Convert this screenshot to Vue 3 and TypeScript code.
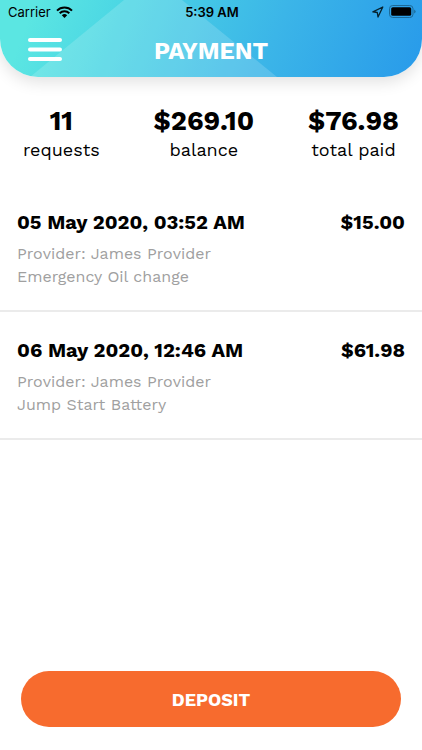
<script setup lang="ts">
interface Stat {
  value: string
  label: string
}

interface Payment {
  date: string
  amount: string
  provider: string
  service: string
}

const stats: Stat[] = [
  { value: '11', label: 'requests' },
  { value: '$269.10', label: 'balance' },
  { value: '$76.98', label: 'total paid' },
]

const payments: Payment[] = [
  {
    date: '05 May 2020, 03:52 AM',
    amount: '$15.00',
    provider: 'James Provider',
    service: 'Emergency Oil change',
  },
  {
    date: '06 May 2020, 12:46 AM',
    amount: '$61.98',
    provider: 'James Provider',
    service: 'Jump Start Battery',
  },
]
</script>

<template>
  <div class="screen">
    <header class="header">
      <svg class="header-art" viewBox="0 0 422 77" preserveAspectRatio="none" aria-hidden="true">
        <polygon points="30,77 124,0 182,0 277,77" fill="#fff" fill-opacity="0.16" />
      </svg>
      <div class="status">
        <div class="carrier">
          <span>Carrier</span>
          <svg width="17" height="12" viewBox="0 0 17 12" aria-hidden="true">
            <g fill="none" stroke="#000" stroke-width="2">
              <path d="M1 4.6a10.6 10.6 0 0 1 15 0" />
              <path d="M3.7 7.3a6.8 6.8 0 0 1 9.6 0" />
            </g>
            <path d="M8.5 12 5.8 9.3a3.8 3.8 0 0 1 5.4 0z" />
          </svg>
        </div>
        <time class="clock">5:39 AM</time>
        <div class="indicators">
          <svg width="12" height="12" viewBox="0 0 12 12" aria-hidden="true">
            <path
              d="M10.8 1 .9 5.9l4.4.6.7 4.5z"
              fill="none"
              stroke="#06222e"
              stroke-width="1.3"
              stroke-linejoin="round"
            />
          </svg>
          <svg width="27" height="13" viewBox="0 0 27 13" aria-hidden="true">
            <rect x=".5" y=".5" width="23.5" height="12" rx="3.2" fill="none" stroke="#1c6a98" />
            <rect x="2.2" y="2.2" width="20" height="8.6" rx="1.6" />
            <path d="M25.2 4.4q1.4.7 1.4 2.1t-1.4 2.1z" fill="#1c6a98" />
          </svg>
        </div>
      </div>
      <div class="title-bar">
        <button class="menu" type="button" aria-label="Menu">
          <svg width="34" height="24" viewBox="0 0 34 24" aria-hidden="true">
            <g fill="#fff">
              <rect y="0" width="34" height="4" rx="2" />
              <rect y="9.5" width="34" height="4" rx="2" />
              <rect y="19" width="34" height="4" rx="2" />
            </g>
          </svg>
        </button>
        <h1 class="title">PAYMENT</h1>
      </div>
    </header>

    <main class="content">
      <dl class="stats">
        <div v-for="stat in stats" :key="stat.label" class="stat">
          <dt class="stat-label">{{ stat.label }}</dt>
          <dd class="stat-value">{{ stat.value }}</dd>
        </div>
      </dl>

      <ul class="payments">
        <li v-for="payment in payments" :key="payment.date" class="payment">
          <div class="payment-head">
            <h2 class="date">{{ payment.date }}</h2>
            <span class="amount">{{ payment.amount }}</span>
          </div>
          <p class="detail">Provider: {{ payment.provider }}</p>
          <p class="detail">{{ payment.service }}</p>
        </li>
      </ul>
    </main>

    <footer class="footer">
      <button class="deposit" type="button">DEPOSIT</button>
    </footer>
  </div>
</template>

<style>
body {
  margin: 0;
  background: #fff;
}
</style>

<style scoped>
.screen {
  display: flex;
  flex-direction: column;
  min-height: 100vh;
  background: #fff;
  color: #000;
  font-family: "Work Sans", Inter, "Liberation Sans", sans-serif;
}

.header {
  position: relative;
  padding-bottom: 8px;
  border-radius: 0 0 38px 38px;
  background: linear-gradient(112deg, #5be6e2 8%, #4bd6e4 28%, #3bb5e8 64%, #289aea 100%);
  box-shadow: 0 5px 16px rgba(0, 0, 0, 0.12);
}

.header-art {
  position: absolute;
  inset: 0;
  width: 100%;
  height: 100%;
  border-radius: inherit;
}

.status {
  position: relative;
  display: grid;
  grid-template-columns: 1fr auto 1fr;
  align-items: center;
  height: 23px;
  padding: 0 6px 0 8px;
  font-family: Inter, "Liberation Sans", sans-serif;
  font-size: 13px;
}

.carrier,
.indicators {
  display: flex;
  align-items: center;
  gap: 5px;
}

.indicators {
  justify-content: flex-end;
}

.clock {
  font-weight: 600;
}

.title-bar {
  position: relative;
  display: grid;
  grid-template-columns: 1fr auto 1fr;
  align-items: center;
  height: 46px;
}

.menu {
  justify-self: start;
  display: flex;
  margin-left: 28px;
  padding: 8px 0 0;
  border: 0;
  background: none;
  cursor: pointer;
}

.title {
  margin: 0;
  padding-top: 10px;
  color: #fff;
  font-size: 24px;
  line-height: 32px;
  font-weight: 700;
}

.content {
  flex: 1;
}

.stats {
  display: flex;
  justify-content: space-between;
  margin: 0;
  padding: 28px 23px 22px;
}

.stat {
  display: flex;
  flex-direction: column-reverse;
  align-items: center;
}

.stat-value {
  margin: 0;
  font-size: 27px;
  line-height: 32px;
  font-weight: 700;
}

.stat-label {
  font-size: 18px;
  line-height: 25px;
}

.payments {
  margin: 0;
  padding: 0;
  list-style: none;
}

.payment {
  padding: 24px 17px 22px;
  border-bottom: 2px solid #ebebeb;
}

.payment-head {
  display: flex;
  justify-content: space-between;
  align-items: center;
  margin-bottom: 6px;
}

.date,
.amount {
  margin: 0;
  font-size: 20px;
  line-height: 28px;
  font-weight: 700;
}

.detail {
  margin: 0;
  color: #a0a0a0;
  font-size: 16px;
  line-height: 23px;
}

.footer {
  padding: 23px 21px;
}

.deposit {
  display: block;
  width: 100%;
  height: 56px;
  border: 0;
  border-radius: 28px;
  background: #f76b2e;
  color: #fff;
  font: inherit;
  font-size: 18px;
  font-weight: 700;
  cursor: pointer;
}
</style>
